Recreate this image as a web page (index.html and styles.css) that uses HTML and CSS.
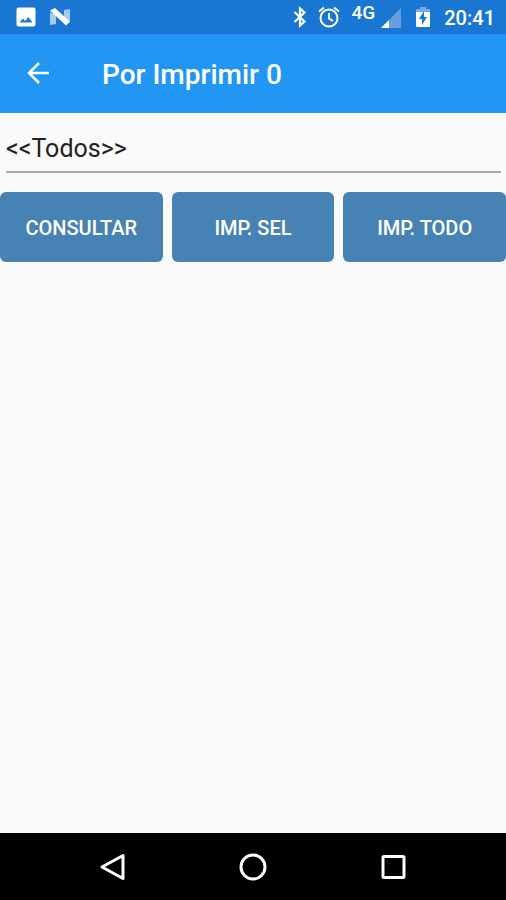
FILE: index.html
```html
<!DOCTYPE html>
<html lang="es">
<head>
  <meta charset="UTF-8">
  <meta name="viewport" content="width=device-width, initial-scale=1.0">
  <title>Por Imprimir</title>
  <link rel="stylesheet" href="styles.css">
</head>
<body>
  <div class="status-bar">
    <div class="status-left">
      <svg width="20" height="20" viewBox="0 0 20 20">
        <path fill="#fff" fill-rule="evenodd" d="M2.500 0.500h15q2 0 2 2v15q0 2-2 2h-15q-2 0-2-2v-15q0-2 2-2zM3.500 15.500h13l-4.200-5.500-3.100 4-2.200-2.600z"/>
      </svg>
      <svg width="22" height="20" viewBox="0 0 22 20">
        <path fill="#a5cbf1" d="M1 5l6 3v9l-6 1zM21 2v13l-6-3V3z"/>
        <path fill="#fff" d="M1 3.500l5-2.500L21 14.500l-4 4z"/>
      </svg>
    </div>
    <div class="status-right">
      <svg width="14" height="22" viewBox="0 0 14 22">
        <path fill="none" stroke="#fff" stroke-width="2.200" d="M1.500 6l10 9.500L7 19.500v-17l4.500 4-10 9.500"/>
      </svg>
      <svg class="alarm" width="22" height="22" viewBox="0 0 22 22">
        <g fill="none" stroke="#fff" stroke-width="2">
          <circle cx="11" cy="12" r="8.500"/>
          <path d="M11 7v5.500l4 2.500M1 5.500L6 1.500M21 5.500L16 1.500"/>
        </g>
      </svg>
      <span class="network">4G</span>
      <svg class="signal" width="20" height="20" viewBox="0 0 20 20">
        <path fill="#659fdc" d="M20 0v20H0z"/>
        <path fill="#fff" d="M8 12v8H0z"/>
      </svg>
      <svg class="battery" width="14" height="20" viewBox="0 0 14 20">
        <path fill="#76aae2" d="M4 0h6v2h4v4H0V2h4z"/>
        <path fill="#fff" d="M0 5h14v14q0 1-1 1H1q-1 0-1-1z"/>
        <path fill="#1976d2" d="M8 4v6h3l-5 8v-6H3z"/>
      </svg>
      <span class="clock">20:41</span>
    </div>
  </div>

  <header class="app-bar">
    <button type="button" class="icon-btn" aria-label="Volver">
      <svg width="24" height="24" viewBox="0 0 24 24">
        <path fill="none" stroke="#fff" stroke-width="2.500" d="M23 11H3M13 1L3 11l10 10"/>
      </svg>
    </button>
    <h1>Por Imprimir 0</h1>
  </header>

  <main>
    <select class="picker" aria-label="Filtro">
      <option>&lt;&lt;Todos&gt;&gt;</option>
    </select>
    <div class="actions">
      <button type="button">CONSULTAR</button>
      <button type="button">IMP. SEL</button>
      <button type="button">IMP. TODO</button>
    </div>
  </main>

  <nav class="nav-bar">
    <button type="button" class="icon-btn" aria-label="Atrás">
      <svg width="28" height="28" viewBox="0 0 28 28">
        <path fill="none" stroke="#fff" stroke-width="3" stroke-linejoin="round" d="M24 2.500v23L3 14z"/>
      </svg>
    </button>
    <button type="button" class="icon-btn" aria-label="Inicio">
      <svg width="28" height="28" viewBox="0 0 28 28">
        <circle cx="14" cy="14" r="12" fill="none" stroke="#fff" stroke-width="3"/>
      </svg>
    </button>
    <button type="button" class="icon-btn" aria-label="Recientes">
      <svg width="28" height="28" viewBox="0 0 28 28">
        <rect x="4" y="3.500" width="21" height="21" rx="1" fill="none" stroke="#fff" stroke-width="3"/>
      </svg>
    </button>
  </nav>
</body>
</html>
```

FILE: styles.css
```css
* {
  box-sizing: border-box;
}
body {
  margin: 0;
  min-height: 100vh;
  display: flex;
  flex-direction: column;
  font-family: Roboto, sans-serif;
  background: #fafafa;
}
svg {
  display: block;
}
button {
  font-family: inherit;
  border: none;
  cursor: pointer;
}
.status-bar {
  display: flex;
  justify-content: space-between;
  height: 34px;
  padding: 0 11px 0 16px;
  background: #1976d2;
  color: #fff;
}
.status-left,
.status-right {
  display: flex;
  align-items: center;
}
.status-left {
  gap: 13px;
}
.alarm {
  margin: 0 12px 0 11px;
}
.network {
  align-self: flex-start;
  padding-top: 3px;
  font-size: 19px;
  line-height: 20px;
  font-weight: 500;
}
.signal {
  margin: 2px 15px 0 6px;
}
.battery {
  margin-right: 14px;
}
.clock {
  padding-top: 2px;
  font-size: 20px;
  font-weight: 500;
}
.app-bar {
  display: flex;
  align-items: center;
  height: 79px;
  padding: 0 18px;
  background: #2196f3;
  color: #fff;
}
.icon-btn {
  padding: 8px;
  background: none;
}
.app-bar .icon-btn {
  margin-right: 44px;
}
h1 {
  margin: 0;
  padding-top: 2px;
  font-size: 28px;
  font-weight: 500;
}
main {
  flex: 1;
}
.picker {
  display: block;
  appearance: none;
  width: calc(100% - 11px);
  height: 48px;
  margin: 12px 5px 19px 6px;
  padding: 0;
  border: none;
  border-bottom: 2px solid #aaa;
  border-radius: 0;
  background: none;
  color: #212121;
  font-family: inherit;
  font-size: 25px;
}
.actions {
  display: grid;
  grid-template-columns: repeat(3, 1fr);
  gap: 9px;
}
.actions button {
  height: 70px;
  padding: 2px 0 0;
  border-radius: 6px;
  background: #4682b4;
  color: #fff;
  font-size: 20px;
  font-weight: 500;
}
.nav-bar {
  display: flex;
  justify-content: center;
  align-items: center;
  gap: 96px;
  height: 67px;
  background: #000;
}
```
